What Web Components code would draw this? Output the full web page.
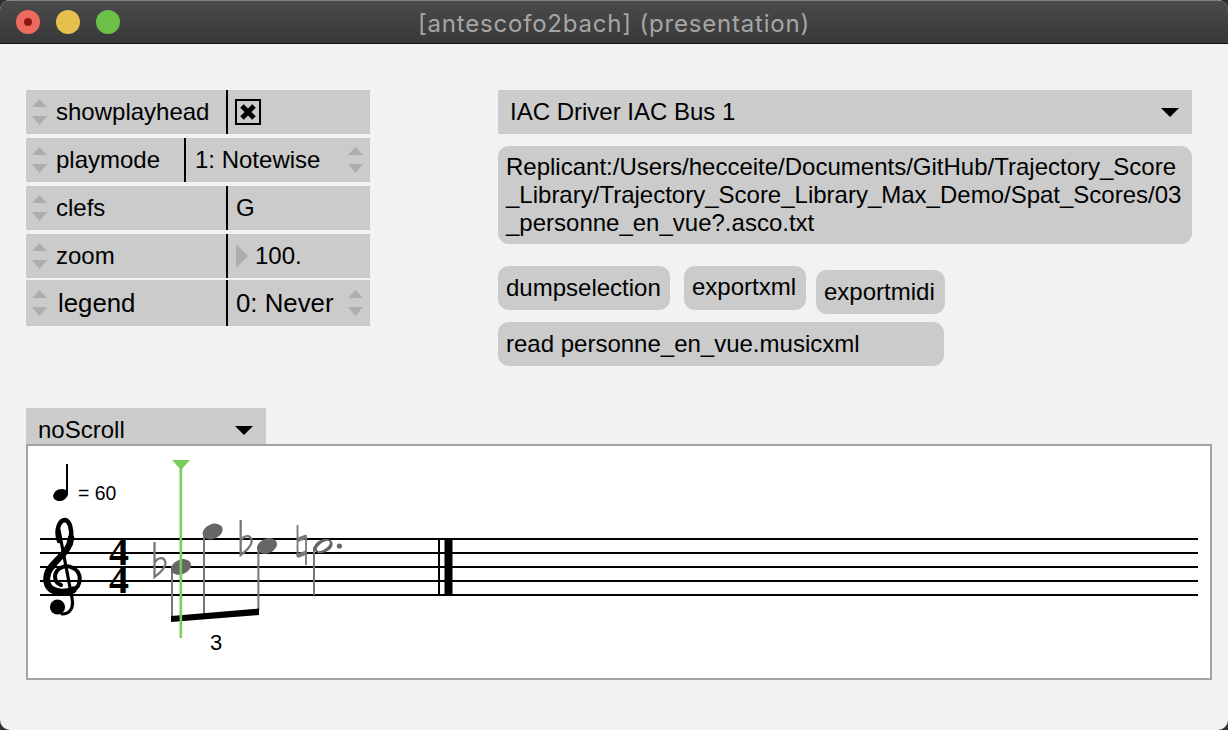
<!DOCTYPE html>
<html>
<head>
<meta charset="utf-8">
<title>[antescofo2bach] (presentation)</title>
<style>
  html, body { margin: 0; height: 100%; background: #2e2e2e; overflow: hidden; }
  body { font-family: "Liberation Sans", Arial, sans-serif; }
</style>
</head>
<body>
<max-window title="[antescofo2bach] (presentation)">
  <div slot="left">
    <attr-row label="showplayhead" kind="check"></attr-row>
    <attr-row label="playmode" value="1: Notewise" kind="enum" split="158"></attr-row>
    <attr-row label="clefs" value="G"></attr-row>
    <attr-row label="zoom" value="100." kind="number"></attr-row>
    <attr-row label="legend" value="0: Never" kind="enum" last></attr-row>
  </div>
  <div slot="right">
    <menu-box wide>IAC Driver IAC Bus 1</menu-box>
    <msg-box style="margin-top:12px;width:694px;height:98px">Replicant:/Users/hecceite/Documents/GitHub/Trajectory_Score<br>_Library/Trajectory_Score_Library_Max_Demo/Spat_Scores/03<br>_personne_en_vue?.asco.txt</msg-box>
    <button-row>
      <msg-box style="width:172px;padding-top:8px">dumpselection</msg-box>
      <msg-box style="width:122px;margin-left:14px">exportxml</msg-box>
      <msg-box style="width:129px;margin-left:10px;margin-top:4px;padding-top:8px">exportmidi</msg-box>
    </button-row>
    <msg-box style="margin-top:12px;width:446px;padding-top:8px">read personne_en_vue.musicxml</msg-box>
  </div>
  <menu-box slot="score" style="width:240px;height:36px" small>noScroll</menu-box>
  <score-view slot="score"></score-view>
</max-window>

<script>
class MaxWindow extends HTMLElement {
  constructor() {
    super();
    this.attachShadow({ mode: "open" });
  }
  connectedCallback() {
    this.shadowRoot.innerHTML = `
      <style>
        :host { display: block; width: 1228px; height: 730px; background: #f2f2f2; color: #000; border-radius: 10px; overflow: hidden; }
        .bar {
          box-sizing: border-box; background: linear-gradient(#4b4b4b, #383838);
          border-top: 1px solid #808080; border-bottom: 1px solid #111; position: relative;
          height: 44px; padding-top: 2px;
          display: flex; align-items: center; justify-content: center;
          color: #a6a6a6; font-family: Inter, "Liberation Sans", sans-serif; font-size: 24px; letter-spacing: 0.8px;
        }
        .lights { position: absolute; left: 16px; top: 9px; display: flex; gap: 16px; }
        .lights i { width: 24px; height: 24px; border-radius: 50%; display: flex; align-items: center; justify-content: center; }
        .lights b { width: 8px; height: 8px; border-radius: 50%; background: #8f1410; }
        .top { display: flex; padding: 46px 36px 0 26px; height: 274px; box-sizing: border-box; }
        .left { width: 344px; }
        .right { margin-left: 128px; }
        .score { padding: 0 16px 0 26px; margin-top: 90px; }
      </style>
      <div class="bar">
        <div class="lights"><i style="background:#ee6a5f"><b></b></i><i style="background:#e6bf4e"></i><i style="background:#6cc04a"></i></div>
        ${this.getAttribute("title")}
      </div>
      <div class="top">
        <div class="left"><slot name="left"></slot></div>
        <div class="right"><slot name="right"></slot></div>
      </div>
      <div class="score"><slot name="score"></slot></div>`;
  }
}

class AttrRow extends HTMLElement {
  constructor() {
    super();
    this.attachShadow({ mode: "open" });
  }
  connectedCallback() {
    const split = this.getAttribute("split") || 200;
    const kind = this.getAttribute("kind");
    const value = this.getAttribute("value") || "";
    const arrows = `<svg width="15" height="26" viewBox="0 0 15 26"><path d="M7.5 0 L15 8 H0 Z M0 17 H15 L7.5 26 Z" fill="#adadad"/></svg>`;
    let right = `<span>${value}</span>`;
    if (kind === "check") {
      right = `<svg width="26" height="26" viewBox="0 0 26 26" style="margin-left:-1px"><rect x="1" y="1" width="24" height="24" fill="none" stroke="#000" stroke-width="2"/><path d="M7 7 L19 19 M19 7 L7 19" stroke="#000" stroke-width="5"/></svg>`;
    } else if (kind === "number") {
      right = `<svg width="12" height="24" viewBox="0 0 12 24" style="margin-right:7px"><path d="M0 0 L12 12 L0 24 Z" fill="#adadad"/></svg><span>${value}</span>`;
    } else if (kind === "enum") {
      right = `<span>${value}</span><span class="end">${arrows}</span>`;
    }
    this.shadowRoot.innerHTML = `
      <style>
        :host { display: block; width: 344px; height: 44px; margin-bottom: 4px; font-size: 24px; }
        :host([last]) { height: 46px; margin-top: -2px; margin-bottom: 0; font-size: 25.8px; }
        .row { display: flex; height: 100%; background: #cbcbcb; }
        .name { width: ${split}px; box-sizing: border-box; display: flex; align-items: center; padding-left: 6px; gap: 9px; flex: none; }
        .name svg { flex: none; }
        .val { flex: 1; display: flex; align-items: center; border-left: 2px solid #000; padding-left: ${split == 200 ? 8 : 9}px; min-width: 0; }
        .end { margin-left: auto; margin-right: 7px; display: flex; }
        :host([last]) .name span { margin-left: 2px; }
      </style>
      <div class="row">
        <div class="name">${arrows}<span>${this.getAttribute("label")}</span></div>
        <div class="val">${right}</div>
      </div>`;
  }
}

class MenuBox extends HTMLElement {
  constructor() {
    super();
    this.attachShadow({ mode: "open" });
  }
  connectedCallback() {
    this.shadowRoot.innerHTML = `
      <style>
        :host { display: block; height: 44px; font-size: 24px; }
        :host([wide]) { width: 694px; }
        .box { height: 100%; box-sizing: border-box; display: flex; align-items: center; justify-content: space-between; background: #cccccc; padding: 0 13px 0 12px; }
        :host([small]) .box { padding: 8px 13px 0 12px; }
        .tri { width: 0; height: 0; border: 9px solid transparent; border-top: 9px solid #000; border-bottom: 0; }
      </style>
      <div class="box"><span><slot></slot></span><i class="tri"></i></div>`;
  }
}

class MsgBox extends HTMLElement {
  constructor() {
    super();
    this.attachShadow({ mode: "open" });
  }
  connectedCallback() {
    this.shadowRoot.innerHTML = `
      <style>
        :host { display: block; height: 44px; box-sizing: border-box; flex: none; background: #cbcbcb; border-radius: 11px; font-size: 24px; line-height: 28px; padding: 7px 8px; white-space: nowrap; }
      </style>
      <slot></slot>`;
  }
}

class ButtonRow extends HTMLElement {
  constructor() {
    super();
    this.attachShadow({ mode: "open" });
    this.shadowRoot.innerHTML = `
      <style>:host { display: flex; align-items: flex-start; margin-top: 22px; height: 44px; }</style>
      <slot></slot>`;
  }
}

class ScoreView extends HTMLElement {
  constructor() {
    super();
    this.attachShadow({ mode: "open" });
  }
  connectedCallback() {
    // coordinates are the screenshot's; the viewBox starts at the box origin
    const staff = [539, 553, 567, 581, 595]
      .map(y => `<line x1="40" x2="1198" y1="${y}" y2="${y}" stroke="#000" stroke-width="2"/>`)
      .join("");
    const flat = (x, y) =>
      `<path d="M${x} ${y - 24} V${y + 11} C${x + 4} ${y + 8} ${x + 11} ${y + 3} ${x + 11} ${y - 3} C${x + 10} ${y - 10} ${x + 3} ${y - 9} ${x} ${y - 3}" fill="none" stroke="#777" stroke-width="2.3"/>`;
    const head = (x, y) =>
      `<ellipse cx="${x}" cy="${y}" rx="10.4" ry="7.4" transform="rotate(-22 ${x} ${y})" fill="#666"/>`;
    this.shadowRoot.innerHTML = `
      <style>
        :host { display: block; position: relative; width: 1186px; height: 236px; box-sizing: border-box; border: 2px solid #a3a3a3; background: #fff; overflow: hidden; }
        svg { display: block; width: 1182px; height: 232px; }
        text { font-family: "Liberation Sans", Arial, sans-serif; fill: #000; }
        .timesig {
          position: absolute; left: 78px; top: 92px; width: 26px; text-align: center;
          font: 700 40px/28px "Liberation Serif", serif; white-space: pre-line; color: #000;
        }
      </style>
      <svg viewBox="28 446 1182 232">
        ${staff}

        <!-- tempo -->
        <ellipse cx="60.5" cy="495" rx="7.6" ry="5.8" transform="rotate(-22 60.5 495)"/>
        <line x1="67" x2="67" y1="464" y2="494" stroke="#000" stroke-width="2"/>
        <text x="78" y="500" font-size="19.4">= 60</text>

        <!-- G clef -->
        <g fill="none" stroke="#000" stroke-linecap="round" stroke-linejoin="round">
          <path d="M59 541 C55 529 60 520 65 520 C70 521 72 530 71 538" stroke-width="4.5"/>
          <path d="M71 538 C70 550 60 556 53 565" stroke-width="6.5"/>
          <path d="M53 565 C45 573 45 584 51 589 C57 593 66 593 73 590" stroke-width="7"/>
          <path d="M73 590 C82 586 82 572 73 568 C65 564 56 568 55 576 C55 581 58 584 61 585" stroke-width="4"/>
          <path d="M59 530 L72 598 C74 608 70 614 62 614" stroke-width="3.2"/>
        </g>
        <circle cx="57.5" cy="607" r="7.6"/>

        <!-- notes -->
        ${flat(154.5, 566)}
        ${flat(240.7, 544)}
        <line x1="172" x2="172" y1="566" y2="620" stroke="#777" stroke-width="2"/>
        <line x1="204" x2="204" y1="532" y2="614" stroke="#777" stroke-width="2"/>
        <line x1="258.4" x2="258.4" y1="546" y2="610" stroke="#777" stroke-width="2"/>
        <path d="M171 616 L259 608.5 V615 L171 622 Z" fill="#000"/>
        ${head(181, 567)}
        ${head(212.7, 531.5)}
        ${head(267, 546)}

        <path d="M297.5 525 V557 M306 535 V565" fill="none" stroke="#777" stroke-width="1.8"/>
        <path d="M297 540 L306.5 536.5 M297 556 L306.5 552.5" fill="none" stroke="#777" stroke-width="4"/>
        <line x1="314" x2="314" y1="547" y2="595" stroke="#777" stroke-width="2"/>
        <ellipse cx="323.3" cy="546" rx="9.8" ry="6.6" transform="rotate(-22 323.3 546)" fill="#666"/>
        <ellipse cx="323.3" cy="546" rx="7.6" ry="3.4" transform="rotate(-35 323.3 546)" fill="#fff"/>
        <circle cx="339.4" cy="546" r="2.6" fill="#666"/>

        <text x="216" y="650" font-size="22" text-anchor="middle">3</text>

        <!-- end barline -->
        <line x1="439" x2="439" y1="538" y2="596" stroke="#000" stroke-width="2"/>
        <rect x="444.5" y="538" width="8" height="58" fill="#000"/>

        <!-- playhead -->
        <line x1="180.8" x2="180.8" y1="464" y2="638" stroke="#7ccc5c" stroke-width="2.6"/>
        <path d="M172 460 H190 L181 470 Z" fill="#7ccc5c"/>
      </svg>
      <div class="timesig">4
4</div>`;
  }
}

customElements.define("max-window", MaxWindow);
customElements.define("attr-row", AttrRow);
customElements.define("menu-box", MenuBox);
customElements.define("msg-box", MsgBox);
customElements.define("button-row", ButtonRow);
customElements.define("score-view", ScoreView);
</script>
</body>
</html>
